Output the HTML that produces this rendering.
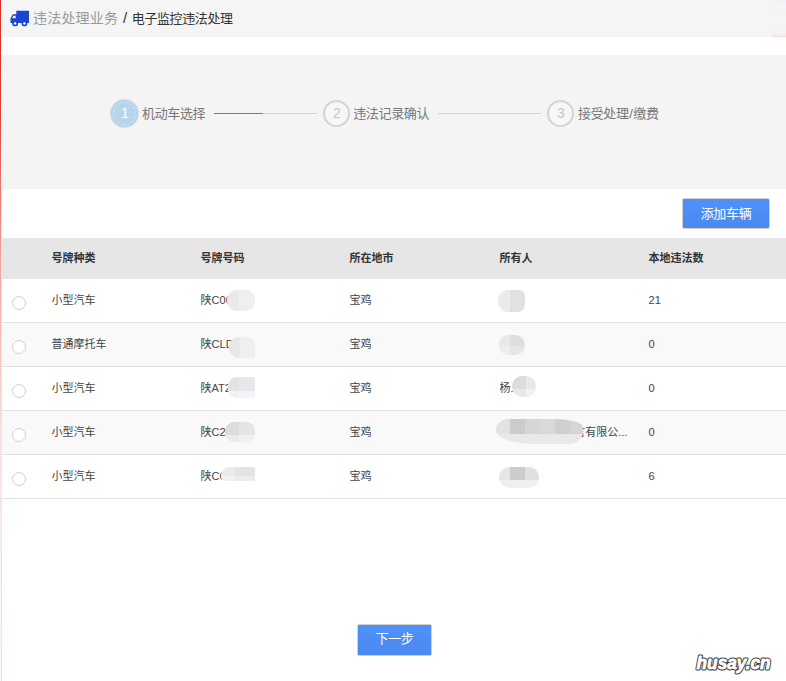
<!DOCTYPE html>
<html lang="zh-CN">
<head>
<meta charset="utf-8">
<title>电子监控违法处理</title>
<style>
*{box-sizing:border-box;margin:0;padding:0}
html,body{width:786px;height:681px;overflow:hidden;background:#fff}
body{font-family:"Liberation Sans","Noto Sans CJK SC",sans-serif;color:#333;position:relative;font-size:11px}
.redline{position:absolute;left:0;top:0;width:1px;height:681px;background:linear-gradient(to bottom,#de2a22 0,#e0372f 100px,#e86a62 170px,#ee7c74 200px,#f08e88 225px,#f4aea8 290px,#f6c6c2 360px,#f8dcda 420px,#fae8e6 480px,#fbf0ef 560px,#fbf2f1 100%)}
.redline2{position:absolute;left:1px;top:0;width:1px;height:681px;background:linear-gradient(to bottom,#fafcfc 189px,#e8e6e6 189px)}
.crumb{position:absolute;left:2px;top:0;width:784px;height:37px;background:#f5f5f5}
.crumb svg{position:absolute;left:8px;top:10px}
.crumb .t{position:absolute;left:31px;top:1px;height:36px;line-height:35px;font-size:14px;letter-spacing:.2px;color:#999;white-space:nowrap}
.crumb .t b{position:absolute;left:90px;top:-1px;font-weight:normal;color:#333;font-size:13px;letter-spacing:-.4px}
.steps{position:absolute;left:2px;top:55px;width:784px;height:134px;background:#f4f4f4}
.step{position:absolute;top:45px;height:27px;white-space:nowrap}
.circ{position:absolute;left:0;top:0;width:27px;height:27px;border-radius:50%;border:2px solid #d9d0d1;color:#c6c6c6;padding-left:.7px;font-size:14px;line-height:23px;text-align:center;background:#f7f7f7}
.circ.on{background:#b8d4ea;border:0;padding-left:1px;line-height:27px;color:#fff;box-shadow:0 0 0 1px #c9dfef}
.circ.on:after{content:"";box-sizing:border-box;position:absolute;left:2px;top:2px;width:23px;height:23px;border-radius:50%;border:1px dashed rgba(255,255,255,.32)}
.lab{position:absolute;left:32px;top:0;line-height:27px;font-size:13px;letter-spacing:-.35px;color:#777}
.ln{position:absolute;top:58px;height:1px;background:#d2d2d2}
.ln i{position:absolute;left:0;top:0;height:1px;width:49px;background:#3c8dd0;display:block}
.btn{position:absolute;background:linear-gradient(to bottom,#4f91fb,#4a89ef);color:#fff;border:1px solid #d4cfc9;border-radius:2px;text-align:center;font-size:13px;letter-spacing:-.35px}
table{position:absolute;left:2px;top:238px;width:784px;border-collapse:separate;border-spacing:0;table-layout:fixed}
th{height:41px;background:#e6e6e6;text-align:left;font-size:11px;line-height:14px;color:#333;font-weight:bold;padding:0 0 1px .6px}
td{height:44px;font-size:11px;line-height:14px;color:#444;border-bottom:1px solid #e2e2e2;white-space:nowrap;padding:0 0 1px .6px;position:relative;vertical-align:middle}
tr.alt td{background:#f9f9f9}
.rad{position:absolute;left:10px;top:17px;width:14px;height:14px;border:1px solid #d0d0d0;border-radius:50%;background:#fff}
.blur{position:absolute;background:#ebebeb;border-radius:9px}
.blur{overflow:hidden;margin-left:1px}
.blur i{position:absolute;display:block}
.art{position:absolute;left:772px;top:0;width:14px;height:37px;opacity:.75}
.art i{position:absolute;left:0;width:14px;display:block}
.wm{position:absolute;left:686px;top:646px}
</style>
</head>
<body>
<div class="redline"></div><div class="redline2"></div>
<div class="crumb">
<svg width="20" height="17" viewBox="0 0 20 17"><path fill="#1d45d3" d="M6.300 .7H18.600a.4.4 0 0 1 .4.400V12.900H.500V8.600L2.300 5Q2.700 4.200 3.600 4.200H6.300z"/><path fill="#f5f5f5" d="M2.100 8.300L3.400 5.700H5.600V8.300z"/><circle cx="5.100" cy="13.400" r="2.900" fill="#1d45d3"/><circle cx="14.400" cy="13.400" r="2.900" fill="#1d45d3"/><circle cx="5.100" cy="13.400" r="1.200" fill="#fff"/><circle cx="14.400" cy="13.400" r="1.200" fill="#fff"/></svg>
<div class="t">违法处理业务<b><span style="font-size:15px;padding-right:5px">/</span>电子监控违法处理</b></div>
</div>
<div class="art"><i style="top:0;height:1px;background:#e8f0fc"></i><i style="top:2px;height:1px;background:#fcecf0"></i><i style="top:5px;height:1px;background:#eef6ee"></i><i style="top:9px;height:1px;background:#f2eefa"></i><i style="top:31px;height:1px;background:#eef6ee"></i><i style="top:33px;height:1px;background:#f0eafa"></i><i style="top:35px;height:1px;background:#fae4e0"></i><i style="top:36px;height:1px;background:#fdd2ca"></i></div>
<div class="steps">
 <div class="step" style="left:108px"><div class="circ on" style="left:1px">1</div><div class="lab">机动车选择</div></div>
 <div class="ln" style="left:212px;width:103px"><i></i></div>
 <div class="step" style="left:321px"><div class="circ">2</div><div class="lab" style="left:30.200px">违法记录确认</div></div>
 <div class="ln" style="left:436px;width:103px"></div>
 <div class="step" style="left:545px"><div class="circ">3</div><div class="lab" style="left:31px">接受处理<span style="padding:0 .7px">/</span>缴费</div></div>
</div>
<div class="btn" style="left:682px;top:198px;width:88px;height:31px;line-height:30px">添加车辆</div>
<table>
<colgroup><col style="width:49px"><col style="width:149px"><col style="width:149px"><col style="width:150px"><col style="width:149px"><col></colgroup>
<tr><th></th><th>号牌种类</th><th>号牌号码</th><th>所在地市</th><th>所有人</th><th>本地违法数</th></tr>
<tr><td><span class="rad"></span></td><td>小型汽车</td><td>陕C00<span class="blur" style="left:26px;top:11px;width:28px;height:21px;background:#efefef;border-radius:10px 9px 9px 11px"><i style="left:0px;top:0px;width:12px;height:21px;background:#e9e9e9"></i></span></td><td>宝鸡</td><td><span class="blur" style="left:-2px;top:11px;width:27px;height:22px;background:#e1e1e2;border-radius:11px 6px 8px 12px"><i style="left:0px;top:0px;width:12px;height:22px;background:#ebebeb"></i></span></td><td>21</td></tr>
<tr class="alt"><td><span class="rad"></span></td><td>普通摩托车</td><td>陕CLD<span class="blur" style="left:28px;top:14px;width:26px;height:21px;background:#efefef;border-radius:10px 8px 3px 11px"><i style="left:0px;top:0px;width:11px;height:21px;background:#e8e8e8"></i></span></td><td>宝鸡</td><td><span class="blur" style="left:-1px;top:12px;width:26px;height:20px;background:#dedede;border-radius:10px"><i style="left:0px;top:0px;width:11px;height:20px;background:#e8e8e8"></i><i style="left:0px;top:11px;width:26px;height:9px;background:rgba(255,255,255,.25)"></i></span></td><td>0</td></tr>
<tr><td><span class="rad"></span></td><td>小型汽车</td><td>陕AT2<span class="blur" style="left:27px;top:10px;width:27px;height:21px;background:#e8e8ec;border-radius:9px 2px 3px 10px"><i style="left:0px;top:0px;width:11px;height:21px;background:#e4e2e2"></i><i style="left:0px;top:14px;width:27px;height:7px;background:rgba(255,255,255,.5)"></i></span></td><td>宝鸡</td><td>杨.<span class="blur" style="left:12px;top:9px;width:24px;height:21px;background:#e8e8e8;border-radius:11px"><i style="left:0px;top:0px;width:14px;height:13px;background:#dcdcdc"></i><i style="left:14px;top:13px;width:12px;height:8px;background:#f2f2f2"></i></span></td><td>0</td></tr>
<tr class="alt"><td><span class="rad"></span></td><td>小型汽车</td><td>陕C2<span class="blur" style="left:24px;top:11px;width:30px;height:20px;background:#e4e4e8;border-radius:10px 9px 9px 11px"><i style="left:0px;top:0px;width:14px;height:20px;background:#dddbdb"></i><i style="left:0px;top:13px;width:30px;height:7px;background:rgba(255,255,255,.45)"></i></span></td><td>宝鸡</td><td><span style="padding-left:74.600px">言有限公...</span><span class="blur" style="left:-4px;top:8px;width:87px;height:25px;background:#e9e9e9;border-radius:13px 30px 14px 40px / 12px 9px 13px 14px"><i style="left:0px;top:0px;width:14px;height:15px;background:#e2e2e2"></i><i style="left:14px;top:0px;width:15px;height:15px;background:#cdcaca"></i><i style="left:29px;top:0px;width:15px;height:15px;background:#d6d6d6"></i><i style="left:44px;top:0px;width:15px;height:15px;background:#d9d9d9"></i><i style="left:59px;top:0px;width:15px;height:15px;background:#cfcfcf"></i><i style="left:74px;top:0px;width:13px;height:15px;background:#d5d5d5"></i></span></td><td>0</td></tr>
<tr><td><span class="rad"></span></td><td>小型汽车</td><td>陕CC<span class="blur" style="left:20px;top:12px;width:34px;height:14px;background:#e4e4e4;border-radius:9px 3px 2px 5px / 10px 3px 2px 5px"><i style="left:0px;top:0px;width:14px;height:14px;background:#ebebeb"></i><i style="left:0px;top:9px;width:36px;height:5px;background:rgba(255,255,255,.3)"></i></span></td><td>宝鸡</td><td><span class="blur" style="left:-1px;top:12px;width:40px;height:21px;background:#f0f0f0;border-radius:11px"><i style="left:0px;top:0px;width:11px;height:13px;background:#e6e6e6"></i><i style="left:11px;top:0px;width:15px;height:13px;background:#cecbcb"></i><i style="left:26px;top:0px;width:14px;height:13px;background:#e0e0e3"></i></span></td><td>6</td></tr>
</table>
<div class="btn" style="left:357px;top:624px;width:75px;height:32px;line-height:27px">下一步</div>
<svg class="wm" width="100" height="35" viewBox="0 0 100 35"><g font-family="Liberation Sans, sans-serif" font-weight="bold" font-style="italic" font-size="18.300"><text x="10.600" y="22.900" textLength="74" lengthAdjust="spacingAndGlyphs" fill="#333" stroke="#333" stroke-width="2.900" stroke-linejoin="round">husay.cn</text><text x="10.600" y="22.900" textLength="74" lengthAdjust="spacingAndGlyphs" fill="#fff" stroke="#fff" stroke-width="0.900" stroke-linejoin="round">husay.cn</text></g></svg>
</body>
</html>
